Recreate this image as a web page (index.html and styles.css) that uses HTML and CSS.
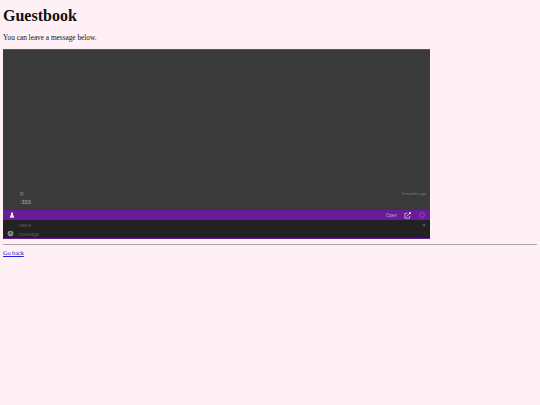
FILE: index.html
```html
<!DOCTYPE html>
<html lang="en">
<head>
    <meta charset="UTF-8">
    <title>Guestbook</title>
    <link rel="stylesheet" href="styles.css">
</head>
<body>
    <h1 class="title">Guestbook</h1>
    <p class="intro">You can leave a message below.</p>

    <div class="chat">
        <div class="messages">
            <div class="message">
                <div class="message-text">
                    <div class="message-name">R</div>
                    <div class="message-body">:333</div>
                </div>
                <div class="message-time">3 months ago</div>
            </div>
        </div>
        <div class="chat-bar">
            <svg class="bar-icon" viewBox="0 0 8 8" width="6" height="6">
                <path d="M4 0.5 a1.4 1.4 0 0 1 1.2 2.2 L7 7.5 H1 L2.8 2.7 A1.4 1.4 0 0 1 4 0.5z" fill="#eee"/>
            </svg>
            <div class="bar-right">
                <span class="bar-open">Open</span>
                <svg class="bar-popout" viewBox="0 0 8 8" width="7" height="7">
                    <path d="M4 1.5 H1 V7 H6.5 V4.5" fill="none" stroke="#d8c8e2" stroke-width="0.9"/>
                    <path d="M3 5 L6.5 1.5" stroke="#d8c8e2" stroke-width="0.9"/>
                    <circle cx="6.8" cy="1.2" r="1.1" fill="#fff"/>
                </svg>
                <span class="bar-circle"></span>
            </div>
        </div>
        <div class="chat-form">
            <div class="form-icon">
                <svg viewBox="0 0 8 8" width="7" height="7">
                    <circle cx="4" cy="4" r="3.2" fill="#9a9a9a"/>
                    <path d="M1.5 4.5 H6.5" stroke="#333" stroke-width="0.8"/>
                    <circle cx="4" cy="2.8" r="1" fill="#333"/>
                </svg>
            </div>
            <div class="form-rows">
                <div class="form-row">
                    <span class="placeholder">name</span>
                    <span class="row-mark">&#9664;</span>
                </div>
                <div class="form-row">
                    <span class="placeholder">message</span>
                    <span class="row-mark">&#8250;</span>
                </div>
            </div>
        </div>
    </div>

    <hr class="rule">
    <a class="back" href="#">Go back</a>
</body>
</html>
```

FILE: styles.css
```css
* {
    box-sizing: border-box;
}

body {
    margin: 0;
    padding: 0 3px;
    background: #fff0f5;
    font-family: "Liberation Serif", serif;
    color: #111;
}

.title {
    margin: 0;
    padding-top: 7px;
    font-size: 16px;
    line-height: 17px;
}

.intro {
    margin: 0;
    padding-top: 9px;
    font-size: 7.3px;
    line-height: 9px;
}

.chat {
    width: 427px;
    height: 190px;
    margin-top: 7px;
    display: flex;
    flex-direction: column;
    font-family: "Liberation Sans", sans-serif;
    border-bottom: 1px solid #6a1b9a;
}

.messages {
    flex: 1;
    display: flex;
    align-items: flex-end;
    background: #3a3a3a;
    border-top: 1px solid #555;
}

.message {
    flex: 1;
    display: flex;
    justify-content: space-between;
    align-items: flex-start;
    padding: 0 4px 3px 17px;
}

.message-name {
    font-size: 5px;
    line-height: 8px;
    color: #8d8d8d;
}

.message-body {
    font-size: 5.5px;
    line-height: 9px;
    color: #b4b4b4;
}

.message-time {
    font-size: 4px;
    line-height: 8px;
    color: #7e7e7e;
}

.chat-bar {
    height: 10px;
    display: flex;
    justify-content: space-between;
    align-items: center;
    padding: 0 5px 0 6px;
    background: #6a1b9a;
}

.bar-right {
    display: flex;
    align-items: center;
    gap: 7px;
}

.bar-open {
    font-size: 4.5px;
    color: #c0a6d2;
}

.bar-popout {
    display: block;
}

.bar-circle {
    width: 6px;
    height: 6px;
    margin-left: 1px;
    border: 1px solid #8a45b5;
    border-radius: 50%;
}

.chat-form {
    flex: none;
    height: 18px;
    display: flex;
    background: #222;
}

.form-icon {
    width: 15px;
    padding: 10px 0 0 4px;
}

.form-icon svg {
    display: block;
}

.form-rows {
    flex: 1;
}

.form-row {
    height: 9px;
    display: flex;
    justify-content: space-between;
    align-items: center;
    padding: 0 5px 0 1px;
    font-size: 5px;
}

.placeholder {
    color: #5f5f5f;
}

.row-mark {
    font-size: 4px;
    color: #5a5a5a;
}

.rule {
    margin: 5px 0 0;
    border: 0;
    border-top: 1px solid #b0a6ab;
    height: 1px;
}

.back {
    display: block;
    width: max-content;
    margin-top: 3px;
    font-size: 6.2px;
    line-height: 9px;
    color: #2222dd;
}
```
